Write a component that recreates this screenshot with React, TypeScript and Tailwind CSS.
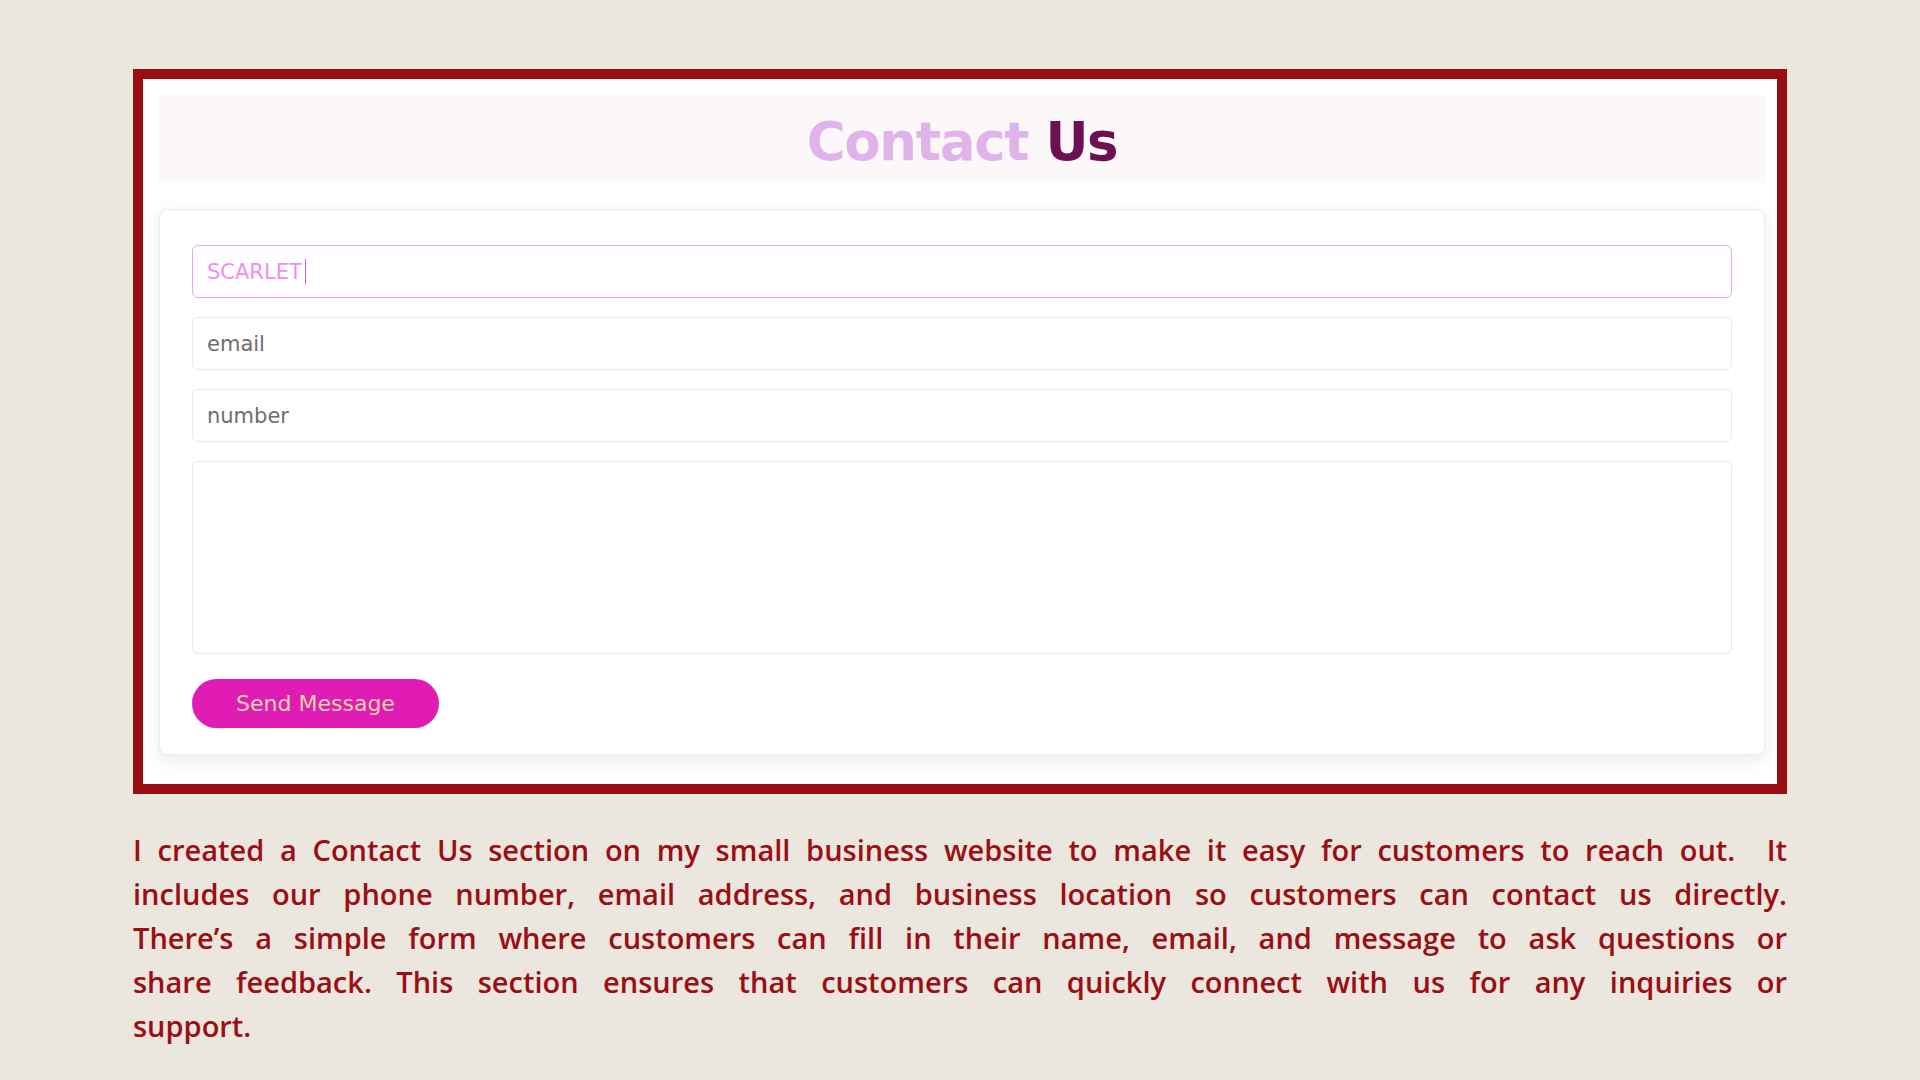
/* Contact Us form card inside a red frame, with a justified description below. */

const lines = [
  "I created a Contact Us section on my small business website to make it easy for customers to reach out.  It",
  "includes our phone number, email address, and business location so customers can contact us directly.",
  "There’s a simple form where customers can fill in their name, email, and message to ask questions or",
  "share feedback. This section ensures that customers can quickly connect with us for any inquiries or",
];

export default function App() {
  return (
    <div className="min-h-screen bg-[#ebe7df] pt-[69px] pb-10">
      <div className="mx-auto w-[1654px]">
        {/* Framed form */}
        <div className="border-[10px] border-[#9a0e13] bg-white pl-4 pr-3 pt-4 pb-[29px]">
          <div className="flex h-[88px] items-center justify-center bg-[#fcf7f8] pt-1">
            <h1 className="font-['DejaVu_Sans',sans-serif] text-[53px] font-bold leading-none tracking-tight">
              <span className="text-[#e0b4ea]">Contact</span>{" "}
              <span className="text-[#6b1050]">Us</span>
            </h1>
          </div>

          <div className="mt-[26px] rounded-lg border border-[#ebebeb] bg-white px-8 pt-[35px] pb-[26px] shadow-[0_6px_18px_rgba(0,0,0,0.08)]">
            <form className="flex flex-col gap-[19px] font-['DejaVu_Sans',sans-serif]">
              <div className="relative">
                <input
                  type="text"
                  defaultValue="SCARLET"
                  className="h-[53px] w-full rounded-md border border-[#eaa6f2] px-[14px] text-[21px] text-[#f08ef0] outline-none"
                />
                <span className="pointer-events-none absolute left-[113px] top-[14px] h-[25px] w-px bg-[#c06ac8]" />
              </div>
              <input
                type="email"
                placeholder="email"
                className="h-[53px] w-full rounded-md border border-[#e8e8e8] px-[14px] text-[21px] text-[#555] outline-none placeholder:text-[#6e6e6e]"
              />
              <input
                type="text"
                placeholder="number"
                className="h-[53px] w-full rounded-md border border-[#e8e8e8] px-[14px] text-[21px] text-[#555] outline-none placeholder:text-[#6e6e6e]"
              />
              <textarea className="h-[193px] w-full resize-none rounded-md border border-[#e8e8e8] px-[14px] py-3 text-[21px] outline-none" />
              <div className="pt-[6px]">
                <button
                  type="button"
                  className="h-[49px] w-[247px] rounded-full bg-[#e01cb4] text-[22px] text-[#f6d3a4]"
                >
                  Send Message
                </button>
              </div>
            </form>
          </div>
        </div>

        {/* Description */}
        <div className="mt-[34px] font-['Open_Sans',sans-serif] text-[29px] font-semibold leading-[44px] text-[#9b0e14]">
          {lines.map((line) => (
            <p key={line} className="whitespace-pre text-justify [text-align-last:justify]">
              {line}
            </p>
          ))}
          <p>support.</p>
        </div>
      </div>
    </div>
  );
}
